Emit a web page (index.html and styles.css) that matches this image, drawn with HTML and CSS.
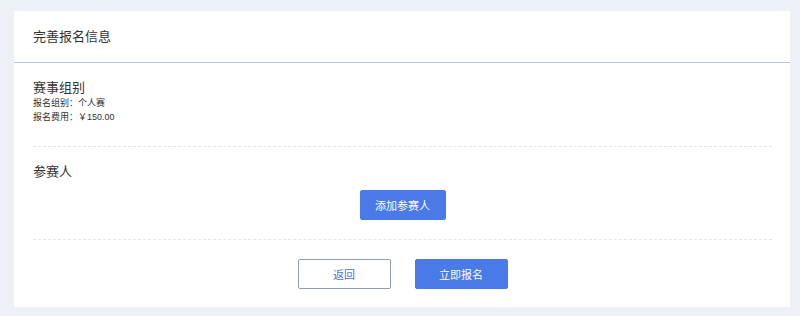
FILE: index.html
```html
<!DOCTYPE html>
<html>
<head>
  <meta charset="utf-8">
  <link rel="stylesheet" href="styles.css">
</head>
<body>
  <div class="card">
    <header class="card-header">完善报名信息</header>
    <div class="card-body">
      <section class="section group">
        <h2 class="section-title">赛事组别</h2>
        <p class="info">报名组别：个人赛</p>
        <p class="info">报名费用：￥150.00</p>
      </section>
      <section class="section players">
        <h2 class="section-title">参赛人</h2>
        <div class="center">
          <button class="btn btn-primary btn-add">添加参赛人</button>
        </div>
      </section>
      <div class="actions">
        <button class="btn btn-outline">返回</button>
        <button class="btn btn-primary">立即报名</button>
      </div>
    </div>
  </div>
</body>
</html>
```

FILE: styles.css
```css
* {
  margin: 0;
  padding: 0;
  box-sizing: border-box;
}

body {
  background: #edf0f6;
  padding: 11px 10px 9px 14px;
  font-family: "Liberation Sans", "Noto Sans CJK SC", sans-serif;
  color: #333;
}

.card {
  width: 776px;
  height: 296px;
  background: #fff;
}

.card-header {
  height: 52px;
  padding-left: 19px;
  font-size: 13px;
  line-height: 51px;
  color: #333;
  border-bottom: 1px solid #b7c4e6;
}

.card-body {
  padding: 0 18px 0 19px;
}

.section {
  border-bottom: 1px dashed #e3e6ec;
}

.group {
  padding: 17px 0 22px;
}

.players {
  padding: 17px 0 19px;
}

.section-title {
  font-size: 13px;
  font-weight: normal;
  line-height: 16px;
  color: #333;
}

.info {
  font-size: 9px;
  line-height: 14px;
  color: #333;
}

.center {
  display: flex;
  justify-content: center;
  margin-top: 10px;
}

.btn {
  height: 30px;
  width: 93px;
  font-family: "Liberation Sans", "Noto Sans CJK SC", sans-serif;
  font-size: 11px;
  border-radius: 2px;
  cursor: pointer;
}

.btn-add {
  width: 86px;
}

.btn-primary {
  background: #4a79e8;
  border: 1px solid #4a79e8;
  color: #fff;
}

.btn-outline {
  background: #fff;
  border: 1px solid #8f9cc0;
  color: #4a6fd0;
}

.actions {
  display: flex;
  justify-content: center;
  gap: 24px;
  padding-top: 19px;
}
```
